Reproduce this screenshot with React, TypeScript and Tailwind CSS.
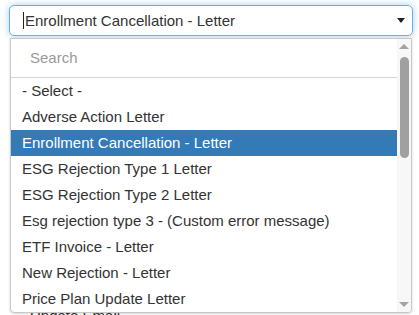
const items = [
  "- Select -",
  "Adverse Action Letter",
  "Enrollment Cancellation - Letter",
  "ESG Rejection Type 1 Letter",
  "ESG Rejection Type 2 Letter",
  "Esg rejection type 3 - (Custom error message)",
  "ETF Invoice - Letter",
  "New Rejection - Letter",
  "Price Plan Update Letter",
  "Update Email",
];

const selected = "Enrollment Cancellation - Letter";

export default function App() {
  return (
    <div className="h-[315px] w-[419px] overflow-hidden bg-white pt-[5px] font-['Liberation_Sans',Arial,sans-serif] text-[15px] text-[#333]">
      <div className="ml-[9px] flex h-[31px] w-[404px] items-center rounded-[5px] border border-[#66afe9] pl-[13px] pr-[7px] shadow-[0_0_7px_rgba(102,175,233,0.6)]">
        <span className="mr-px h-[17px] w-px bg-[#222]" />
        <span className="flex-1 truncate leading-none">{selected}</span>
        <span className="h-0 w-0 border-x-[4px] border-t-[5px] border-x-transparent border-t-[#222]" />
      </div>

      <div className="relative z-10 ml-[10px] mt-[2px] flex h-[275px] w-[402px] overflow-hidden rounded-b-[4px] border border-[#c8c8c8] bg-white shadow-[0_1px_3px_rgba(0,0,0,0.15)]">
        <div className="flex min-w-0 flex-1 flex-col">
          <div className="flex h-[39px] shrink-0 items-center border-b border-[#d4d4d4] pl-[19px] text-[#999]">
            Search
          </div>
          <ul className="flex-1 overflow-hidden">
            {items.map((t) => (
              <li
                key={t}
                className={
                  t === selected
                    ? "flex h-[26px] items-center bg-[#337ab7] pl-[11px] text-white"
                    : "flex h-[26px] items-center pl-[11px]"
                }
              >
                {t}
              </li>
            ))}
          </ul>
        </div>
        <div className="flex w-[14px] shrink-0 flex-col items-center bg-[#f7f7f7] pt-[5px]">
          <span className="h-0 w-0 border-x-[5px] border-b-[5px] border-x-transparent border-b-[#a3a3a3]" />
          <span className="mt-[8px] h-[101px] w-[9px] rounded-full bg-[#a0a0a0]" />
          <span className="flex-1" />
          <span className="mb-[5px] h-0 w-0 border-x-[5px] border-t-[5px] border-x-transparent border-t-[#a3a3a3]" />
        </div>
      </div>

      <div className="-mt-[6px] pl-[30px] leading-[18px]">Update Email</div>
    </div>
  );
}
